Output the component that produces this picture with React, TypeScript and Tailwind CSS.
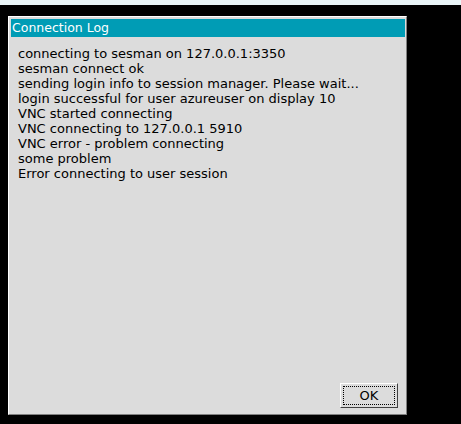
export default function App() {
  const lines = [
    "connecting to sesman on 127.0.0.1:3350",
    "sesman connect ok",
    "sending login info to session manager. Please wait...",
    "login successful for user azureuser on display 10",
    "VNC started connecting",
    "VNC connecting to 127.0.0.1 5910",
    "VNC error - problem connecting",
    "some problem",
    "Error connecting to user session",
  ];
  return (
    <div className="w-[461px] h-[424px] bg-black flex flex-col overflow-hidden" style={{ fontFamily: '"DejaVu Sans", sans-serif' }}>
      <div className="h-[5px] bg-[#eaf5f8]" />
      <div className="pl-[8px] pt-[11px]">
        <div className="w-[399px] h-[399px] bg-[#dcdcdc] border-t border-l border-white border-r border-b border-r-[#808080] border-b-[#808080] flex flex-col">
          <div className="ml-[2px] mr-[1px] mt-[2px] h-[18px] bg-[#009cb5] text-white text-[12.5px] leading-[18px] pl-[1px]">
            Connection Log
          </div>
          <div className="pl-[9px] pt-[9px] text-black text-[13px] leading-[15px] flex-1">
            {lines.map((l, i) => (
              <div key={i}>{l}</div>
            ))}
          </div>
          <div className="flex justify-end pr-[8px] pb-[6px]">
            <div className="w-[58px] h-[25px] border border-t-white border-l-white border-r-[#404040] border-b-[#404040] p-[2px]">
              <div className="w-full h-full border border-dotted border-black flex items-center justify-center text-[13px] text-black">
                OK
              </div>
            </div>
          </div>
        </div>
      </div>
    </div>
  );
}
